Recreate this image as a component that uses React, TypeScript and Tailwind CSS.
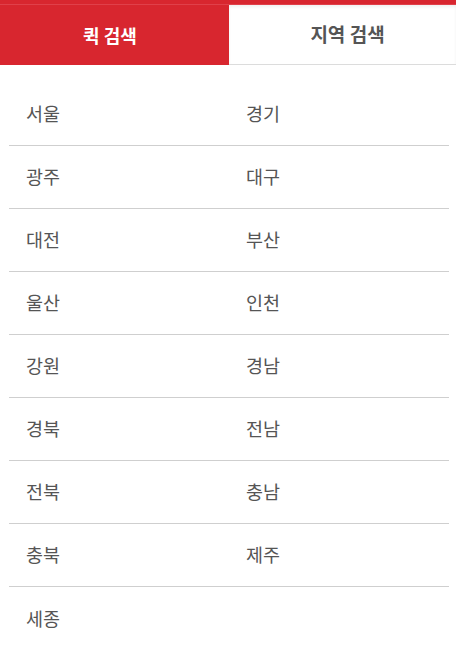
import React, { useState } from 'react';

const REGIONS = [
  '서울', '경기',
  '광주', '대구',
  '대전', '부산',
  '울산', '인천',
  '강원', '경남',
  '경북', '전남',
  '전북', '충남',
  '충북', '제주',
  '세종',
];

const App: React.FC = () => {
  const [tab, setTab] = useState<'quick' | 'region'>('quick');

  const rows: string[][] = [];
  for (let i = 0; i < REGIONS.length; i += 2) {
    rows.push(REGIONS.slice(i, i + 2));
  }

  return (
    <div
      className="w-[456px] min-h-[649px] bg-white"
      style={{ fontFamily: '"Noto Sans CJK KR", "Noto Sans", sans-serif' }}
    >
      <div className="h-[5px] bg-[#d8262f] border-b border-[#e0404a]" />
      <div className="flex h-[60px]">
        <button
          onClick={() => setTab('quick')}
          className={`w-[229px] flex items-center justify-center pr-[9px] text-[18px] font-bold ${
            tab === 'quick' ? 'bg-[#d8262f] text-white' : 'bg-white text-[#555] border-b border-[#dcdcdc]'
          }`}
        >
          퀵 검색
        </button>
        <button
          onClick={() => setTab('region')}
          className={`flex-1 flex items-center justify-center pl-[10px] text-[19px] font-bold ${
            tab === 'region' ? 'bg-[#d8262f] text-white' : 'bg-white text-[#555] border-b border-[#dcdcdc] shadow-[inset_0_2px_3px_rgba(0,0,0,0.06)]'
          }`}
        >
          지역 검색
        </button>
      </div>

      <ul className="ml-[9px] mr-[7px] pt-[18px]">
        {rows.map((row, i) => (
          <li
            key={i}
            className={`grid grid-cols-2 h-[63px] ${i < rows.length - 1 ? 'border-b border-[#cfcfcf]' : ''}`}
          >
            {row.map((name) => (
              <a
                key={name}
                href="#"
                className="flex items-center pl-[17px] text-[18.5px] text-[#555]"
              >
                {name}
              </a>
            ))}
          </li>
        ))}
      </ul>
    </div>
  );
};

export default App;
